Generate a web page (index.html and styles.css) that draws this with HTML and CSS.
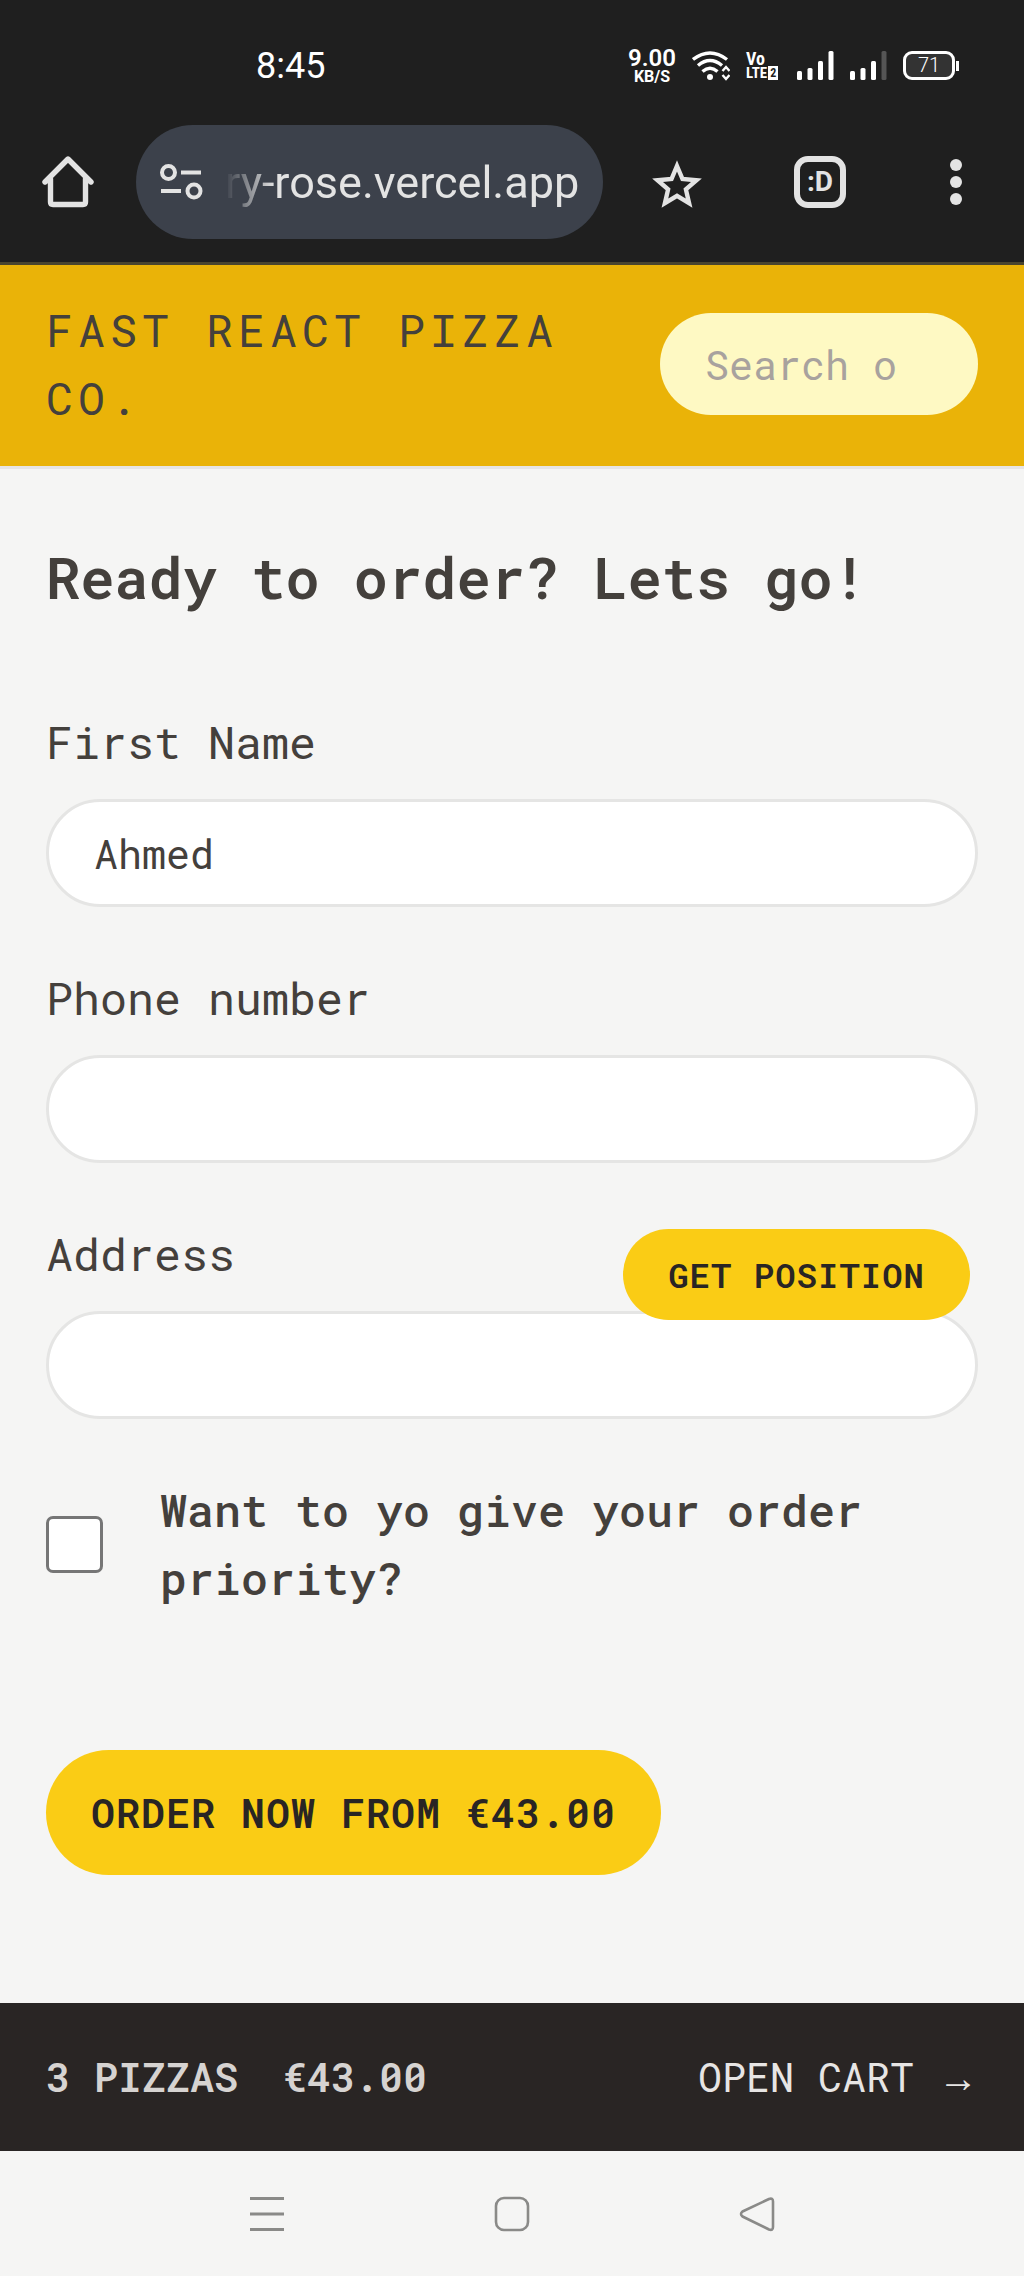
FILE: index.html
```html
<!DOCTYPE html>
<html lang="en">
<head>
<meta charset="utf-8">
<meta name="viewport" content="width=device-width, initial-scale=1">
<title>Fast React Pizza Co.</title>
<link rel="stylesheet" href="styles.css">
</head>
<body>
<div class="browser">
  <div class="status">
    <time class="clock">8:45</time>
    <div class="indicators">
      <div class="speed"><span class="speed-value">9.00</span><span class="speed-unit">KB/S</span></div>
      <svg width="38" height="30" viewBox="0 0 38 30" fill="none" stroke="#fff" stroke-width="3.4" aria-hidden="true">
        <path d="M1 8.500Q18 -4.500 35 8.500M6 14.500Q18 4.500 30 14.500M10.500 20.500Q18 14 25.500 20.500"/>
        <circle cx="18" cy="26" r="3" fill="#fff" stroke="none"/>
        <path d="M30.500 20l3.500-4 3.500 4M30.500 24l3.500 4 3.500-4" stroke-width="2.400"/>
      </svg>
      <div class="volte">
        <span class="volte-top">Vo</span>
        <span class="volte-bottom">LTE<span class="sim">2</span></span>
      </div>
      <svg width="37" height="29" viewBox="0 0 37 29" fill="#fff" aria-hidden="true">
        <rect y="20" width="5" height="9" rx="1.500"/><rect x="10.500" y="17" width="5" height="12" rx="1.500"/><rect x="21" y="10" width="5" height="19" rx="1.500"/><rect x="31.500" width="5" height="29" rx="1.500"/>
      </svg>
      <svg width="37" height="29" viewBox="0 0 37 29" fill="#fff" aria-hidden="true">
        <rect y="20" width="5" height="9" rx="1.500"/><rect x="10.500" y="17" width="5" height="12" rx="1.500"/><rect x="21" y="10" width="5" height="19" rx="1.500"/><rect x="31.500" width="5" height="29" rx="1.500" fill="#555"/>
      </svg>
      <div class="battery"><span class="battery-body">71</span><span class="battery-tip"></span></div>
    </div>
  </div>
  <div class="toolbar">
    <button class="icon-button" type="button" aria-label="Home">
      <svg width="52" height="54" viewBox="0 0 52 54" fill="none" stroke="#e3e3e3" stroke-width="5.400" stroke-linecap="round" stroke-linejoin="round" aria-hidden="true">
        <path d="M3 27L26 4l23 23M8.500 24v23q0 2.500 2.500 2.500h30q2.500 0 2.500-2.500V24"/>
      </svg>
    </button>
    <div class="address-bar">
      <svg width="43" height="36" viewBox="0 0 43 36" fill="none" stroke="#e3e3e3" stroke-width="4" aria-hidden="true">
        <circle cx="8.500" cy="8.500" r="6.500"/><path d="M21 8.500h20M1 27h20"/><circle cx="34" cy="27" r="6.500"/>
      </svg>
      <input class="url" type="text" value="ry-rose.vercel.app" aria-label="Web address">
    </div>
    <div class="actions">
      <button class="icon-button" type="button" aria-label="Bookmark">
        <svg width="50" height="54" viewBox="0 0 50 54" fill="none" stroke="#e3e3e3" stroke-width="4.400" aria-hidden="true">
          <path d="M25 11l5.500 13 14 1.200-10.600 9.200 3.200 13.800L25 40.800l-12.100 7.400 3.200-13.800L5.500 25.200l14-1.200z"/>
        </svg>
      </button>
      <button class="tabs" type="button" aria-label="Open tabs">:D</button>
      <button class="icon-button" type="button" aria-label="More options">
        <svg width="36" height="48" viewBox="0 0 36 48" fill="#e3e3e3" aria-hidden="true">
          <circle cx="18" cy="7" r="6"/><circle cx="18" cy="24" r="6"/><circle cx="18" cy="41" r="6"/>
        </svg>
      </button>
    </div>
  </div>
</div>

<header class="header">
  <a class="brand" href="#">Fast React Pizza Co.</a>
  <input class="search" type="search" placeholder="Search o" aria-label="Search order">
</header>

<main class="main">
  <h1 class="title">Ready to order? Lets go!</h1>
  <form class="form">
    <div class="field">
      <label for="name">First Name</label>
      <input class="input" id="name" type="text" value="Ahmed">
    </div>
    <div class="field">
      <label for="phone">Phone number</label>
      <input class="input" id="phone" type="tel">
    </div>
    <div class="field">
      <label for="address">Address</label>
      <input class="input" id="address" type="text">
      <button class="button button-small" type="button">Get position</button>
    </div>
    <div class="priority">
      <input class="checkbox" id="priority" type="checkbox">
      <label for="priority">Want to yo give your order priority?</label>
    </div>
    <button class="button button-large" type="submit">Order now from €43.00</button>
  </form>
</main>

<footer class="cart">
  <p class="totals"><span>3 pizzas</span><span>€43.00</span></p>
  <a class="cart-link" href="#">Open cart <span class="arrow">→</span></a>
</footer>

<nav class="system-nav" aria-label="System">
  <button class="icon-button" type="button" aria-label="Recent apps">
    <svg width="36" height="36" viewBox="0 0 36 36" stroke="#8a8a88" stroke-width="3" aria-hidden="true"><path d="M1 2.500h34M1 18h34M1 33.500h34"/></svg>
  </button>
  <button class="icon-button" type="button" aria-label="Home screen">
    <svg width="36" height="36" viewBox="0 0 36 36" fill="none" stroke="#8a8a88" stroke-width="2.600" aria-hidden="true"><rect x="2" y="2" width="32" height="32" rx="8"/></svg>
  </button>
  <button class="icon-button" type="button" aria-label="Back">
    <svg width="36" height="36" viewBox="0 0 36 36" fill="none" stroke="#8a8a88" stroke-width="2.600" stroke-linejoin="round" aria-hidden="true"><path d="M30 3L3.500 15.500q-3 2.500 0 5L30 33.500q4 1.500 4-2.500V5.500q0-4-4-2.500z"/></svg>
  </button>
</nav>
</body>
</html>
```
FILE: styles.css
```css
* {
  box-sizing: border-box;
}

body {
  margin: 0;
  background: #f5f5f4;
  color: #44403c;
  font-family: "Roboto Mono", "DejaVu Sans Mono", "Liberation Mono", monospace;
  font-size: 45px;
  line-height: 68px;
}

button,
input {
  font: inherit;
  color: inherit;
  margin: 0;
}

a {
  color: inherit;
  text-decoration: none;
}

/* Phone status bar and browser toolbar */
.browser {
  position: relative;
  background: #1f1f1f;
  box-shadow: 0 3px #4a452f;
  color: #fff;
  font-family: Roboto, "Liberation Sans", sans-serif;
  line-height: 1;
}

.status {
  display: flex;
  justify-content: space-between;
  align-items: center;
  height: 125px;
  padding: 6px 65px 0 256px;
}

.clock {
  font-size: 36px;
}

.indicators {
  display: flex;
  align-items: center;
  gap: 16px;
}

.speed,
.volte {
  display: flex;
  flex-direction: column;
  align-items: center;
  font-weight: 700;
}

.speed-value {
  font-size: 24px;
  line-height: 22px;
  font-weight: 600;
}

.speed-unit {
  font-size: 16px;
  line-height: 16px;
}

.volte {
  align-items: flex-start;
  width: 35px;
  font-family: "Roboto Condensed", "Liberation Sans Narrow", Roboto, sans-serif;
  font-size: 18px;
  line-height: 15px;
}

.volte-bottom {
  display: flex;
  align-items: center;
  font-size: 15px;
}

.sim {
  margin-left: 1px;
  padding: 0 2px;
  background: #fff;
  color: #1f1f1f;
  font-size: 12px;
  line-height: 14px;
}

.battery {
  display: flex;
  align-items: center;
  gap: 1px;
}

.battery-body {
  width: 52px;
  height: 29px;
  border: 3px solid #fff;
  border-radius: 9px;
  background: #333;
  font-size: 20px;
  font-weight: 300;
  line-height: 23px;
  text-align: center;
}

.battery-tip {
  width: 3px;
  height: 10px;
  background: #fff;
}

.toolbar {
  display: flex;
  align-items: center;
  gap: 42px;
  padding: 0 50px 23px 42px;
}

.icon-button {
  display: flex;
  padding: 0;
  border: 0;
  background: none;
}

.address-bar {
  display: flex;
  flex: 1;
  align-items: center;
  gap: 22px;
  min-width: 0;
  height: 114px;
  padding: 0 22px 0 24px;
  border-radius: 57px;
  background: #3c414b;
}

.url {
  flex: 1;
  min-width: 0;
  padding: 0;
  border: 0;
  background: none;
  color: #e3e3e3;
  font-size: 45px;
  mask-image: linear-gradient(to right, transparent, #000 50px);
}

.actions {
  display: flex;
  align-items: center;
  gap: 92px;
  margin-left: 7px;
}

.tabs {
  width: 52px;
  height: 52px;
  padding: 0;
  border: 6px solid #e3e3e3;
  border-radius: 14px;
  background: none;
  color: #e3e3e3;
  font-size: 28px;
  font-weight: 700;
  line-height: 36px;
}

/* Site header */
.header {
  display: flex;
  align-items: center;
  justify-content: space-between;
  gap: 45px;
  padding: 34px 46px;
  border-bottom: 3px solid #e7e5e4;
  background: #eab308;
}

.brand {
  letter-spacing: 5px;
  text-transform: uppercase;
}

.search {
  flex: none;
  width: 318px;
  height: 102px;
  padding: 0 45px;
  border: 0;
  border-radius: 51px;
  appearance: none;
  background: #fef9c3;
  font-size: 40px;
}

.search::placeholder {
  color: #a8a29e;
  opacity: 1;
}

/* Order form */
.main {
  padding: 68px 46px 128px;
}

.title {
  margin: 0 0 91px;
  font-size: 57px;
  font-weight: 600;
  line-height: 80px;
}

.form {
  display: flex;
  flex-direction: column;
  align-items: flex-start;
  gap: 57px;
}

.field {
  position: relative;
  display: flex;
  flex-direction: column;
  gap: 23px;
  width: 100%;
}

.input {
  width: 100%;
  height: 108px;
  padding: 0 45px;
  border: 3px solid #e5e5e4;
  border-radius: 54px;
  background: #fff;
  font-size: 40px;
}

.button {
  border: 0;
  border-radius: 63px;
  background: #facc15;
  color: #292524;
  font-weight: 600;
  text-transform: uppercase;
}

.button-small {
  position: absolute;
  right: 8px;
  bottom: 99px;
  height: 91px;
  padding: 0 45px;
  font-size: 34px;
  letter-spacing: 1px;
}

.button-large {
  height: 125px;
  margin-top: 81px;
  padding: 0 45px;
  font-size: 40px;
  letter-spacing: 1px;
}

.priority {
  display: flex;
  align-items: center;
  gap: 57px;
  font-weight: 500;
}

.checkbox {
  flex: none;
  width: 57px;
  height: 57px;
  border: 3px solid #767676;
  border-radius: 7px;
  appearance: none;
  background: #fff;
}

/* Cart summary */
.cart {
  display: flex;
  align-items: center;
  justify-content: space-between;
  height: 148px;
  padding: 0 46px;
  background: #292524;
  color: #e7e5e4;
  font-size: 40px;
  text-transform: uppercase;
}

.totals {
  display: flex;
  gap: 45px;
  margin: 0;
  color: #d6d3d1;
  font-weight: 600;
}

.arrow {
  font-family: "Liberation Sans", sans-serif;
}

/* Android navigation */
.system-nav {
  display: flex;
  align-items: center;
  justify-content: center;
  gap: 209px;
  height: 125px;
}
```
